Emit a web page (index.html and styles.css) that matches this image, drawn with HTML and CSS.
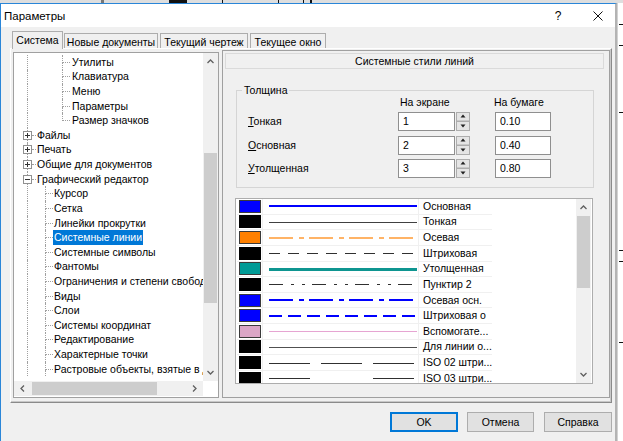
FILE: index.html
```html
<!DOCTYPE html>
<html lang="ru">
<head>
<meta charset="utf-8">
<title>Параметры</title>
<link rel="stylesheet" href="styles.css">
</head>
<body>
<div class="desk-top">
  <i class="mk m1"></i><i class="mk m2"></i><i class="mk m3"></i><i class="mk m4"></i><i class="mk m5"></i><i class="mk m6"></i>
</div>
<div class="screen">
  <div class="dialog">
    <div class="titlebar">
      <span class="title">Параметры</span>
      <span class="tb-btn help">?</span>
      <span class="tb-btn close"><svg width="10" height="10" viewBox="0 0 10 10"><path d="M0.5 0.5L9.5 9.5M9.5 0.5L0.5 9.5" stroke="#111" stroke-width="1"/></svg></span>
    </div>
    <div class="dlg-body">
      <div class="tabs">
        <div class="tab sel t1">Система</div>
        <div class="tab t2">Новые документы</div>
        <div class="tab t3">Текущий чертеж</div>
        <div class="tab t4">Текущее окно</div>
      </div>
      <div class="tabpage">
        <div class="tree">
          <div class="tree-main">
            <div class="tree-content">
              <div class="tr"><i class="vl w35"></i><i class="el"><b></b><b></b></i><span class="tx l3">Утилиты</span></div>
              <div class="tr"><i class="vl w35"></i><i class="el"><b></b><b></b></i><span class="tx l3">Клавиатура</span></div>
              <div class="tr"><i class="vl w35"></i><i class="el"><b></b><b></b></i><span class="tx l3">Меню</span></div>
              <div class="tr"><i class="vl w35"></i><i class="el"><b></b><b></b></i><span class="tx l3">Параметры</span></div>
              <div class="tr"><i class="vl w35"></i><i class="el last"><b></b><b></b></i><span class="tx l3">Размер значков</span></div>
              <div class="tr"><i class="ex"><b></b><svg width="9" height="9" viewBox="0 0 9 9"><rect x="0.5" y="0.5" width="8" height="8" fill="#fff" stroke="#919191"/><path d="M2 4.5H7M4.5 2V7" stroke="#333"/></svg><b></b></i><i class="hc"></i><span class="tx l1">Файлы</span></div>
              <div class="tr"><i class="ex"><b></b><svg width="9" height="9" viewBox="0 0 9 9"><rect x="0.5" y="0.5" width="8" height="8" fill="#fff" stroke="#919191"/><path d="M2 4.5H7M4.5 2V7" stroke="#333"/></svg><b></b></i><i class="hc"></i><span class="tx l1">Печать</span></div>
              <div class="tr"><i class="ex"><b></b><svg width="9" height="9" viewBox="0 0 9 9"><rect x="0.5" y="0.5" width="8" height="8" fill="#fff" stroke="#919191"/><path d="M2 4.5H7M4.5 2V7" stroke="#333"/></svg><b></b></i><i class="hc"></i><span class="tx l1">Общие для документов</span></div>
              <div class="tr"><i class="ex"><b></b><svg width="9" height="9" viewBox="0 0 9 9"><rect x="0.5" y="0.5" width="8" height="8" fill="#fff" stroke="#919191"/><path d="M2 4.5H7" stroke="#333"/></svg><b></b></i><i class="hc"></i><span class="tx l1">Графический редактор</span></div>
              <div class="tr"><i class="vl w18"></i><i class="el"><b></b><b></b></i><span class="tx l2">Курсор</span></div>
              <div class="tr"><i class="vl w18"></i><i class="el"><b></b><b></b></i><span class="tx l2">Сетка</span></div>
              <div class="tr"><i class="vl w18"></i><i class="el"><b></b><b></b></i><span class="tx l2">Линейки прокрутки</span></div>
              <div class="tr"><i class="vl w18"></i><i class="el"><b></b><b></b></i><span class="tx sel">Системные линии</span></div>
              <div class="tr"><i class="vl w18"></i><i class="el"><b></b><b></b></i><span class="tx l2">Системные символы</span></div>
              <div class="tr"><i class="vl w18"></i><i class="el"><b></b><b></b></i><span class="tx l2">Фантомы</span></div>
              <div class="tr"><i class="vl w18"></i><i class="el"><b></b><b></b></i><span class="tx l2">Ограничения и степени свободы</span></div>
              <div class="tr"><i class="vl w18"></i><i class="el"><b></b><b></b></i><span class="tx l2">Виды</span></div>
              <div class="tr"><i class="vl w18"></i><i class="el"><b></b><b></b></i><span class="tx l2">Слои</span></div>
              <div class="tr"><i class="vl w18"></i><i class="el"><b></b><b></b></i><span class="tx l2">Системы координат</span></div>
              <div class="tr"><i class="vl w18"></i><i class="el"><b></b><b></b></i><span class="tx l2">Редактирование</span></div>
              <div class="tr"><i class="vl w18"></i><i class="el"><b></b><b></b></i><span class="tx l2">Характерные точки</span></div>
              <div class="tr"><i class="vl w18"></i><i class="el"><b></b><b></b></i><span class="tx l2">Растровые объекты, взятые в документ</span></div>
            </div>
            <div class="vs">
              <div class="sb-btn"><svg width="7" height="5" viewBox="0 0 7 5"><path d="M0.5 4L3.5 1L6.5 4" fill="none" stroke="#606060" stroke-width="1.3"/></svg></div>
              <div class="track"><div class="thumb-v tree-thumb"></div></div>
              <div class="sb-btn"><svg width="7" height="5" viewBox="0 0 7 5"><path d="M0.5 1L3.5 4L6.5 1" fill="none" stroke="#606060" stroke-width="1.3"/></svg></div>
            </div>
          </div>
          <div class="hs">
            <div class="sb-hbtn"><svg width="5" height="7" viewBox="0 0 5 7"><path d="M4 0.5L1 3.5L4 6.5" fill="none" stroke="#606060" stroke-width="1.3"/></svg></div>
            <div class="htrack"><div class="thumb-h"></div></div>
            <div class="sb-hbtn"><svg width="5" height="7" viewBox="0 0 5 7"><path d="M1 0.5L4 3.5L1 6.5" fill="none" stroke="#606060" stroke-width="1.3"/></svg></div>
            <div class="corner"></div>
          </div>
        </div>
        <div class="rpanel">
          <div class="rp-head">Системные стили линий</div>
          <div class="group">
            <span class="legend">Толщина</span>
            <div class="thick-grid">
              <span class="hd hd-screen">На экране</span>
              <span class="hd hd-paper">На бумаге</span>
              <span class="lbl r1"><u>Т</u>онкая</span>
              <span class="inp r1 c-scr">1</span>
              <span class="spin r1"><svg width="14" height="19" viewBox="0 0 14 19"><rect x="0.5" y="0.5" width="13" height="8.5" fill="#e5e5e5" stroke="#adadad"/><rect x="0.5" y="9.5" width="13" height="9" fill="#e5e5e5" stroke="#adadad"/><path d="M7 2.5L9.5 5.5H4.5Z" fill="#222"/><path d="M4.5 12.5H9.5L7 15.5Z" fill="#222"/></svg></span>
              <span class="inp r1 c-pap">0.10</span>
              <span class="lbl r2"><u>О</u>сновная</span>
              <span class="inp r2 c-scr">2</span>
              <span class="spin r2"><svg width="14" height="19" viewBox="0 0 14 19"><rect x="0.5" y="0.5" width="13" height="8.5" fill="#e5e5e5" stroke="#adadad"/><rect x="0.5" y="9.5" width="13" height="9" fill="#e5e5e5" stroke="#adadad"/><path d="M7 2.5L9.5 5.5H4.5Z" fill="#222"/><path d="M4.5 12.5H9.5L7 15.5Z" fill="#222"/></svg></span>
              <span class="inp r2 c-pap">0.40</span>
              <span class="lbl r3"><u>У</u>толщенная</span>
              <span class="inp r3 c-scr">3</span>
              <span class="spin r3"><svg width="14" height="19" viewBox="0 0 14 19"><rect x="0.5" y="0.5" width="13" height="8.5" fill="#e5e5e5" stroke="#adadad"/><rect x="0.5" y="9.5" width="13" height="9" fill="#e5e5e5" stroke="#adadad"/><path d="M7 2.5L9.5 5.5H4.5Z" fill="#222"/><path d="M4.5 12.5H9.5L7 15.5Z" fill="#222"/></svg></span>
              <span class="inp r3 c-pap">0.80</span>
            </div>
          </div>
          <div class="linelist">
            <div class="rows">
              <div class="lrow"><div class="c sw"><i class="swatch s-blue"></i></div><div class="c ln"><svg width="148" height="6" viewBox="0 0 148 6"><line x1="0" y1="3" x2="148" y2="3" stroke="#0000ff" stroke-width="2"/></svg></div><div class="c nm">Основная</div></div>
              <div class="lrow"><div class="c sw"><i class="swatch s-black"></i></div><div class="c ln"><svg width="148" height="6" viewBox="0 0 148 6"><line x1="0" y1="3.5" x2="148" y2="3.5" stroke="#404040" stroke-width="1"/></svg></div><div class="c nm">Тонкая</div></div>
              <div class="lrow"><div class="c sw"><i class="swatch s-orange"></i></div><div class="c ln"><svg width="148" height="6" viewBox="0 0 148 6"><line x1="0" y1="3" x2="148" y2="3" stroke="#ffb366" stroke-width="2" stroke-dasharray="24 6 5 5"/></svg></div><div class="c nm">Осевая</div></div>
              <div class="lrow"><div class="c sw"><i class="swatch s-black"></i></div><div class="c ln"><svg width="148" height="6" viewBox="0 0 148 6"><line x1="0" y1="3.5" x2="148" y2="3.5" stroke="#303030" stroke-width="1" stroke-dasharray="11 8"/></svg></div><div class="c nm">Штриховая</div></div>
              <div class="lrow"><div class="c sw"><i class="swatch s-teal"></i></div><div class="c ln"><svg width="148" height="6" viewBox="0 0 148 6"><line x1="0" y1="3.5" x2="148" y2="3.5" stroke="#0e9590" stroke-width="3"/></svg></div><div class="c nm">Утолщенная</div></div>
              <div class="lrow"><div class="c sw"><i class="swatch s-black"></i></div><div class="c ln"><svg width="148" height="6" viewBox="0 0 148 6"><line x1="0" y1="3.5" x2="148" y2="3.5" stroke="#303030" stroke-width="1" stroke-dasharray="14 8 3 8 3 7"/></svg></div><div class="c nm">Пунктир 2</div></div>
              <div class="lrow"><div class="c sw"><i class="swatch s-blue"></i></div><div class="c ln"><svg width="148" height="6" viewBox="0 0 148 6"><line x1="0" y1="3" x2="148" y2="3" stroke="#0000ff" stroke-width="2" stroke-dasharray="24 6 5 5"/></svg></div><div class="c nm">Осевая осн.</div></div>
              <div class="lrow"><div class="c sw"><i class="swatch s-blue"></i></div><div class="c ln"><svg width="148" height="6" viewBox="0 0 148 6"><line x1="0" y1="3" x2="148" y2="3" stroke="#0000ff" stroke-width="2" stroke-dasharray="13 6"/></svg></div><div class="c nm">Штриховая о</div></div>
              <div class="lrow"><div class="c sw"><i class="swatch s-pink"></i></div><div class="c ln"><svg width="148" height="6" viewBox="0 0 148 6"><line x1="0" y1="3.5" x2="148" y2="3.5" stroke="#e6a5d2" stroke-width="1"/></svg></div><div class="c nm">Вспомогате...</div></div>
              <div class="lrow"><div class="c sw"><i class="swatch s-black"></i></div><div class="c ln"><svg width="148" height="6" viewBox="0 0 148 6"><line x1="0" y1="3.5" x2="148" y2="3.5" stroke="#505050" stroke-width="1"/></svg></div><div class="c nm">Для линии о...</div></div>
              <div class="lrow"><div class="c sw"><i class="swatch s-black"></i></div><div class="c ln"><svg width="148" height="6" viewBox="0 0 148 6"><line x1="0" y1="3.5" x2="148" y2="3.5" stroke="#303030" stroke-width="1" stroke-dasharray="41 11"/></svg></div><div class="c nm">ISO 02 штри...</div></div>
              <div class="lrow"><div class="c sw"><i class="swatch s-black"></i></div><div class="c ln"><svg width="148" height="6" viewBox="0 0 148 6"><line x1="0" y1="3.5" x2="148" y2="3.5" stroke="#303030" stroke-width="1" stroke-dasharray="41 63"/></svg></div><div class="c nm">ISO 03 штри...</div></div>
            </div>
            <div class="vs lvs">
              <div class="sb-btn"><svg width="7" height="5" viewBox="0 0 7 5"><path d="M0.5 4L3.5 1L6.5 4" fill="none" stroke="#606060" stroke-width="1.3"/></svg></div>
              <div class="track"><div class="thumb-v list-thumb"></div></div>
              <div class="sb-btn"><svg width="7" height="5" viewBox="0 0 7 5"><path d="M0.5 1L3.5 4L6.5 1" fill="none" stroke="#606060" stroke-width="1.3"/></svg></div>
            </div>
          </div>
        </div>
      </div>
      <div class="buttons">
        <span class="btn ok">OK</span>
        <span class="btn cancel">Отмена</span>
        <span class="btn helpbtn">Справка</span>
      </div>
    </div>
  </div>
  <div class="behind">
    <i class="tick k1"></i><i class="tick k2"></i><i class="tick k3"></i><i class="tick k4"></i><i class="tick k5"></i><i class="tick k6"></i>
  </div>
</div>
</body>
</html>
```

FILE: styles.css
```css
* { box-sizing: border-box; }
html, body { margin: 0; padding: 0; }
body {
  width: 623px;
  height: 441px;
  overflow: hidden;
  background: #ffffff;
  font-family: "Liberation Sans", Arial, sans-serif;
  font-size: 10.5px;
  color: #000;
}
i, b { display: block; font-style: normal; }

/* background application strip */
.desk-top { height: 3px; background: #dedede; display: flex; }
.mk { height: 3px; background: #111; flex: none; }
.m1 { width: 3px; margin-left: 101px; background: #777; }
.m2 { width: 18px; margin-left: 65px; }
.m3 { width: 1px; margin-left: 35px; }
.m4 { width: 1px; margin-left: 55px; }
.m5 { width: 1px; margin-left: 24px; }
.m6 { width: 2px; margin-left: 6px; }

.screen { display: flex; height: 438px; }

.dialog {
  width: 617px;
  height: 438px;
  flex: none;
  border-left: 1px solid #2a86d8;
  border-top: 1px solid #2a86d8;
  border-right: 2px solid #b3b3b3;
  background: #f0f0f0;
  display: flex;
  flex-direction: column;
}

.behind {
  flex: 1;
  background: #fff;
  border-left: 1px solid #d2d2d2;
  display: flex;
  flex-direction: column;
}
.tick { height: 1px; background: #111; margin-left: 1px; }
.k1 { margin-top: 21px; }
.k2 { margin-top: 20px; }
.k3 { margin-top: 66px; }
.k4 { margin-top: 137px; }
.k5 { margin-top: 10px; }
.k6 { margin-top: 80px; }

/* title bar */
.titlebar {
  height: 23px;
  flex: none;
  background: #fff;
  display: flex;
  align-items: center;
  padding-left: 3px;
}
.title { font-size: 11.5px; }
.tb-btn { width: 34px; height: 23px; display: flex; align-items: center; justify-content: center; }
.help { margin-left: auto; margin-right: 6px; font-size: 12px; }

/* body */
.dlg-body {
  flex: 1;
  padding: 0 3px 0 9px;
  display: flex;
  flex-direction: column;
}

.tabs { height: 21px; display: flex; align-items: flex-end; flex: none; }
.tab {
  height: 15px;
  border: 1px solid #adadad;
  border-bottom: none;
  background: #f0f0f0;
  line-height: 11px;
  padding-top: 3px;
  text-align: center;
  white-space: nowrap;
  flex: none;
}
.tab.sel {
  height: 18px;
  margin-bottom: -1px;
  position: relative;
  z-index: 1;
  padding-top: 3px;
}
.t1 { width: 51px; margin-left: 2px; }
.t2 { width: 94px; margin-left: 1px; }
.t3 { width: 88px; margin-left: 2px; }
.t4 { width: 76px; margin-left: 2px; }

.tabpage {
  width: 602px;
  height: 355px;
  flex: none;
  border: 1px solid;
  border-color: #ffffff #8a8a8a #8a8a8a #ffffff;
  box-shadow: inset -1px -1px 0 #c8c8c8;
  display: flex;
  align-items: flex-start;
}

/* tree */
.tree {
  width: 206px;
  height: 346px;
  margin: 3px 0 0 2px;
  border: 1px solid #a0a0a0;
  background: #fff;
  display: flex;
  flex-direction: column;
  flex: none;
}
.tree-main { height: 328px; display: flex; flex: none; overflow: hidden; }
.tree-content {
  width: 189px;
  overflow: hidden;
  padding-top: 2px;
  flex: none;
}
.tr {
  height: 14.62px;
  display: flex;
  align-items: center;
  white-space: nowrap;
}
.vl {
  flex: none;
  align-self: stretch;
  margin-left: 13px;
  border-left: 1px dotted #a0a0a0;
}
.w35 { width: 35px; }
.w18 { width: 18px; }
.el {
  flex: none;
  width: 8px;
  align-self: stretch;
  display: flex;
  flex-direction: column;
}
.el b { flex: 1; }
.el b:first-child { border-left: 1px dotted #a0a0a0; border-bottom: 1px dotted #a0a0a0; }
.el b:last-child { border-left: 1px dotted #a0a0a0; }
.el.last b:last-child { border-left: none; }
.ex {
  flex: none;
  width: 9px;
  margin-left: 9px;
  align-self: stretch;
  display: flex;
  flex-direction: column;
}
.ex b { flex: 1; width: 5px; border-right: 1px dotted #a0a0a0; }
.ex svg { display: block; flex: none; }
.hc { flex: none; width: 4px; height: 0; border-top: 1px dotted #a0a0a0; }
.tx { line-height: 13px; white-space: nowrap; }
.l1 { margin-left: 1px; }
.l2 { margin-left: 1px; }
.l3 { margin-left: 2px; }
.tx.sel {
  align-self: stretch;
  display: flex;
  align-items: center;
  padding: 0 1px;
  background: #0078d7;
  color: #fff;
}

/* scrollbars */
.vs {
  width: 15px;
  flex: none;
  display: flex;
  flex-direction: column;
  background: #f0f0f0;
}
.sb-btn { height: 17px; flex: none; display: flex; align-items: center; justify-content: center; }
.sb-btn svg, .sb-hbtn svg { display: block; }
.track { flex: 1; }
.thumb-v { background: #cdcdcd; margin: 0 1px; }
.tree-thumb { margin-top: 83px; height: 150px; }
.list-thumb { height: 72px; }

.hs { height: 15px; flex: none; display: flex; background: #f0f0f0; }
.sb-hbtn { width: 17px; flex: none; display: flex; align-items: center; justify-content: center; }
.htrack { flex: 1; padding-top: 1px; }
.thumb-h { width: 125px; height: 13px; margin-left: 1px; background: #cdcdcd; }
.corner { width: 15px; flex: none; background: #fff; }

/* right panel */
.rpanel {
  width: 388px;
  height: 348px;
  margin: 1px 0 0 3px;
  border: 1px solid #a0a0a0;
  flex: none;
  display: flex;
  flex-direction: column;
  align-items: flex-start;
}
.rp-head {
  width: 379px;
  height: 16px;
  margin: 2px 0 0 2px;
  border: 1px solid #dadada;
  line-height: 14px;
  text-align: center;
  flex: none;
}
.group {
  width: 358px;
  height: 98px;
  margin: 21px 0 0 13px;
  border: 1px solid #d5d5d5;
  flex: none;
}
.legend {
  display: block;
  width: fit-content;
  margin: -7px 0 0 5px;
  padding: 0 2px;
  line-height: 13px;
  background: #f0f0f0;
}
.thick-grid {
  display: grid;
  grid-template-columns: 150px 57px 1px 14px 25px 56px;
  grid-template-rows: 11.5px 19px 19px 19px;
  row-gap: 4.5px;
  padding-left: 11px;
  margin-top: -1px;
}
.hd { line-height: 13px; align-self: start; white-space: nowrap; }
.hd-screen { grid-column: 2 / 5; grid-row: 1; padding-left: 2px; }
.hd-paper { grid-column: 6; grid-row: 1; margin-left: -1px; }
.r1 { grid-row: 2; }
.r2 { grid-row: 3; }
.r3 { grid-row: 4; }
.lbl { grid-column: 1; align-self: center; line-height: 13px; }
.inp {
  height: 19px;
  border: 1px solid #8f8f8f;
  background: #fff;
  padding-left: 4px;
  line-height: 17px;
}
.c-scr { grid-column: 2; }
.c-pap { grid-column: 6; }
.spin { grid-column: 4; }
.spin svg { display: block; }

/* line styles list */
.linelist {
  width: 358px;
  height: 186px;
  margin: 10px 0 0 12px;
  border: 1px solid #adadad;
  background: #fff;
  display: flex;
  flex: none;
  padding-right: 1px;
}
.rows { flex: 1; padding-left: 1px; overflow: hidden; }
.lrow {
  width: 255px;
  height: 15.64px;
  display: grid;
  grid-template-columns: 25px 155px 73px;
  column-gap: 1px;
  background: #f0f0f0;
  border-bottom: 1px solid #f0f0f0;
}
.c { background: #fff; display: flex; align-items: center; overflow: hidden; }
.sw { justify-content: center; }
.swatch { width: 22px; height: 13px; border: 1px solid #3a3a3a; }
.s-blue { background: #0000ff; }
.s-black { background: #000; border-color: #000; }
.s-orange { background: #ff8000; }
.s-teal { background: #009a96; }
.s-pink { background: #dba6c6; }
.ln { padding-left: 6px; }
.ln svg { display: block; }
.nm { padding-left: 4px; white-space: nowrap; line-height: 13px; }

/* buttons */
.buttons {
  margin-top: 9px;
  height: 20px;
  display: flex;
  justify-content: flex-end;
  flex: none;
}
.btn {
  height: 20px;
  background: #e1e1e1;
  border: 1px solid #adadad;
  display: flex;
  align-items: center;
  justify-content: center;
  flex: none;
}
.ok { width: 68px; margin-right: 9px; border-color: #0078d7; box-shadow: inset 0 0 0 1px #0078d7; }
.cancel { width: 67px; margin-right: 10px; }
.helpbtn { width: 68px; }
```
